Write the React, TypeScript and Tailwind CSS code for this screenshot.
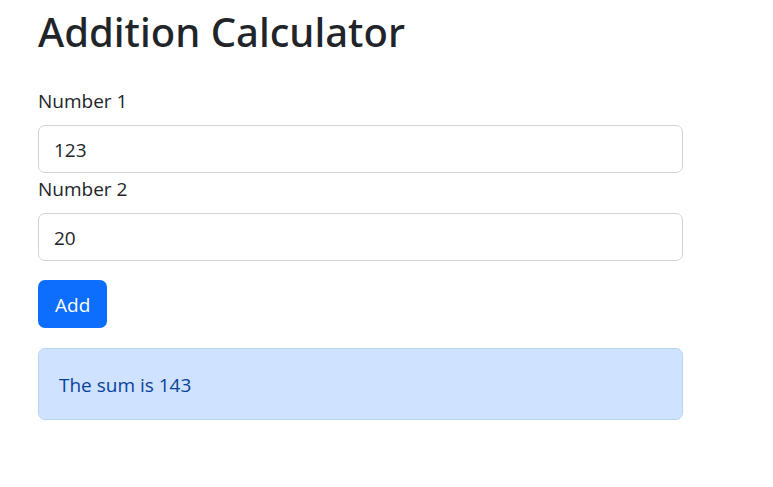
import { useState } from "react";

const inputClass =
  "block h-12 w-full rounded-[7px] border border-[#ced4da] bg-white px-[15px] pt-[2px] text-[19px] leading-7 text-[#212529] outline-none focus:border-[#86b7fe]";

export default function App() {
  const [first, setFirst] = useState("123");
  const [second, setSecond] = useState("20");
  const [sum, setSum] = useState(143);

  return (
    <main className="min-h-screen bg-white pl-[38px] pr-[90px] pt-2 font-['Open_Sans','Noto_Sans',sans-serif] text-[19px] leading-7 text-[#212529]">
      <h1 className="mb-[31px] font-['Noto_Sans','Open_Sans',sans-serif] text-[40px] font-medium leading-12">Addition Calculator</h1>
      <form
        onSubmit={(e) => {
          e.preventDefault();
          setSum(Number(first) + Number(second));
        }}
      >
        <label htmlFor="first" className="mb-[10px] block">Number 1</label>
        <input id="first" className={inputClass} value={first} onChange={(e) => setFirst(e.target.value)} />
        <label htmlFor="second" className="mb-[10px] mt-[2px] block">Number 2</label>
        <input id="second" className={inputClass} value={second} onChange={(e) => setSecond(e.target.value)} />
        <button type="submit" className="mt-[19px] h-12 rounded-[7px] bg-[#0d6efd] px-[17px] pt-[2px] text-white">Add</button>
      </form>
      <div role="status" className="mt-5 rounded-[7px] border border-[#b6d4fe] bg-[#cfe2ff] px-5 pb-5 pt-[22px] text-[#084298]">
        The sum is {sum}
      </div>
    </main>
  );
}
